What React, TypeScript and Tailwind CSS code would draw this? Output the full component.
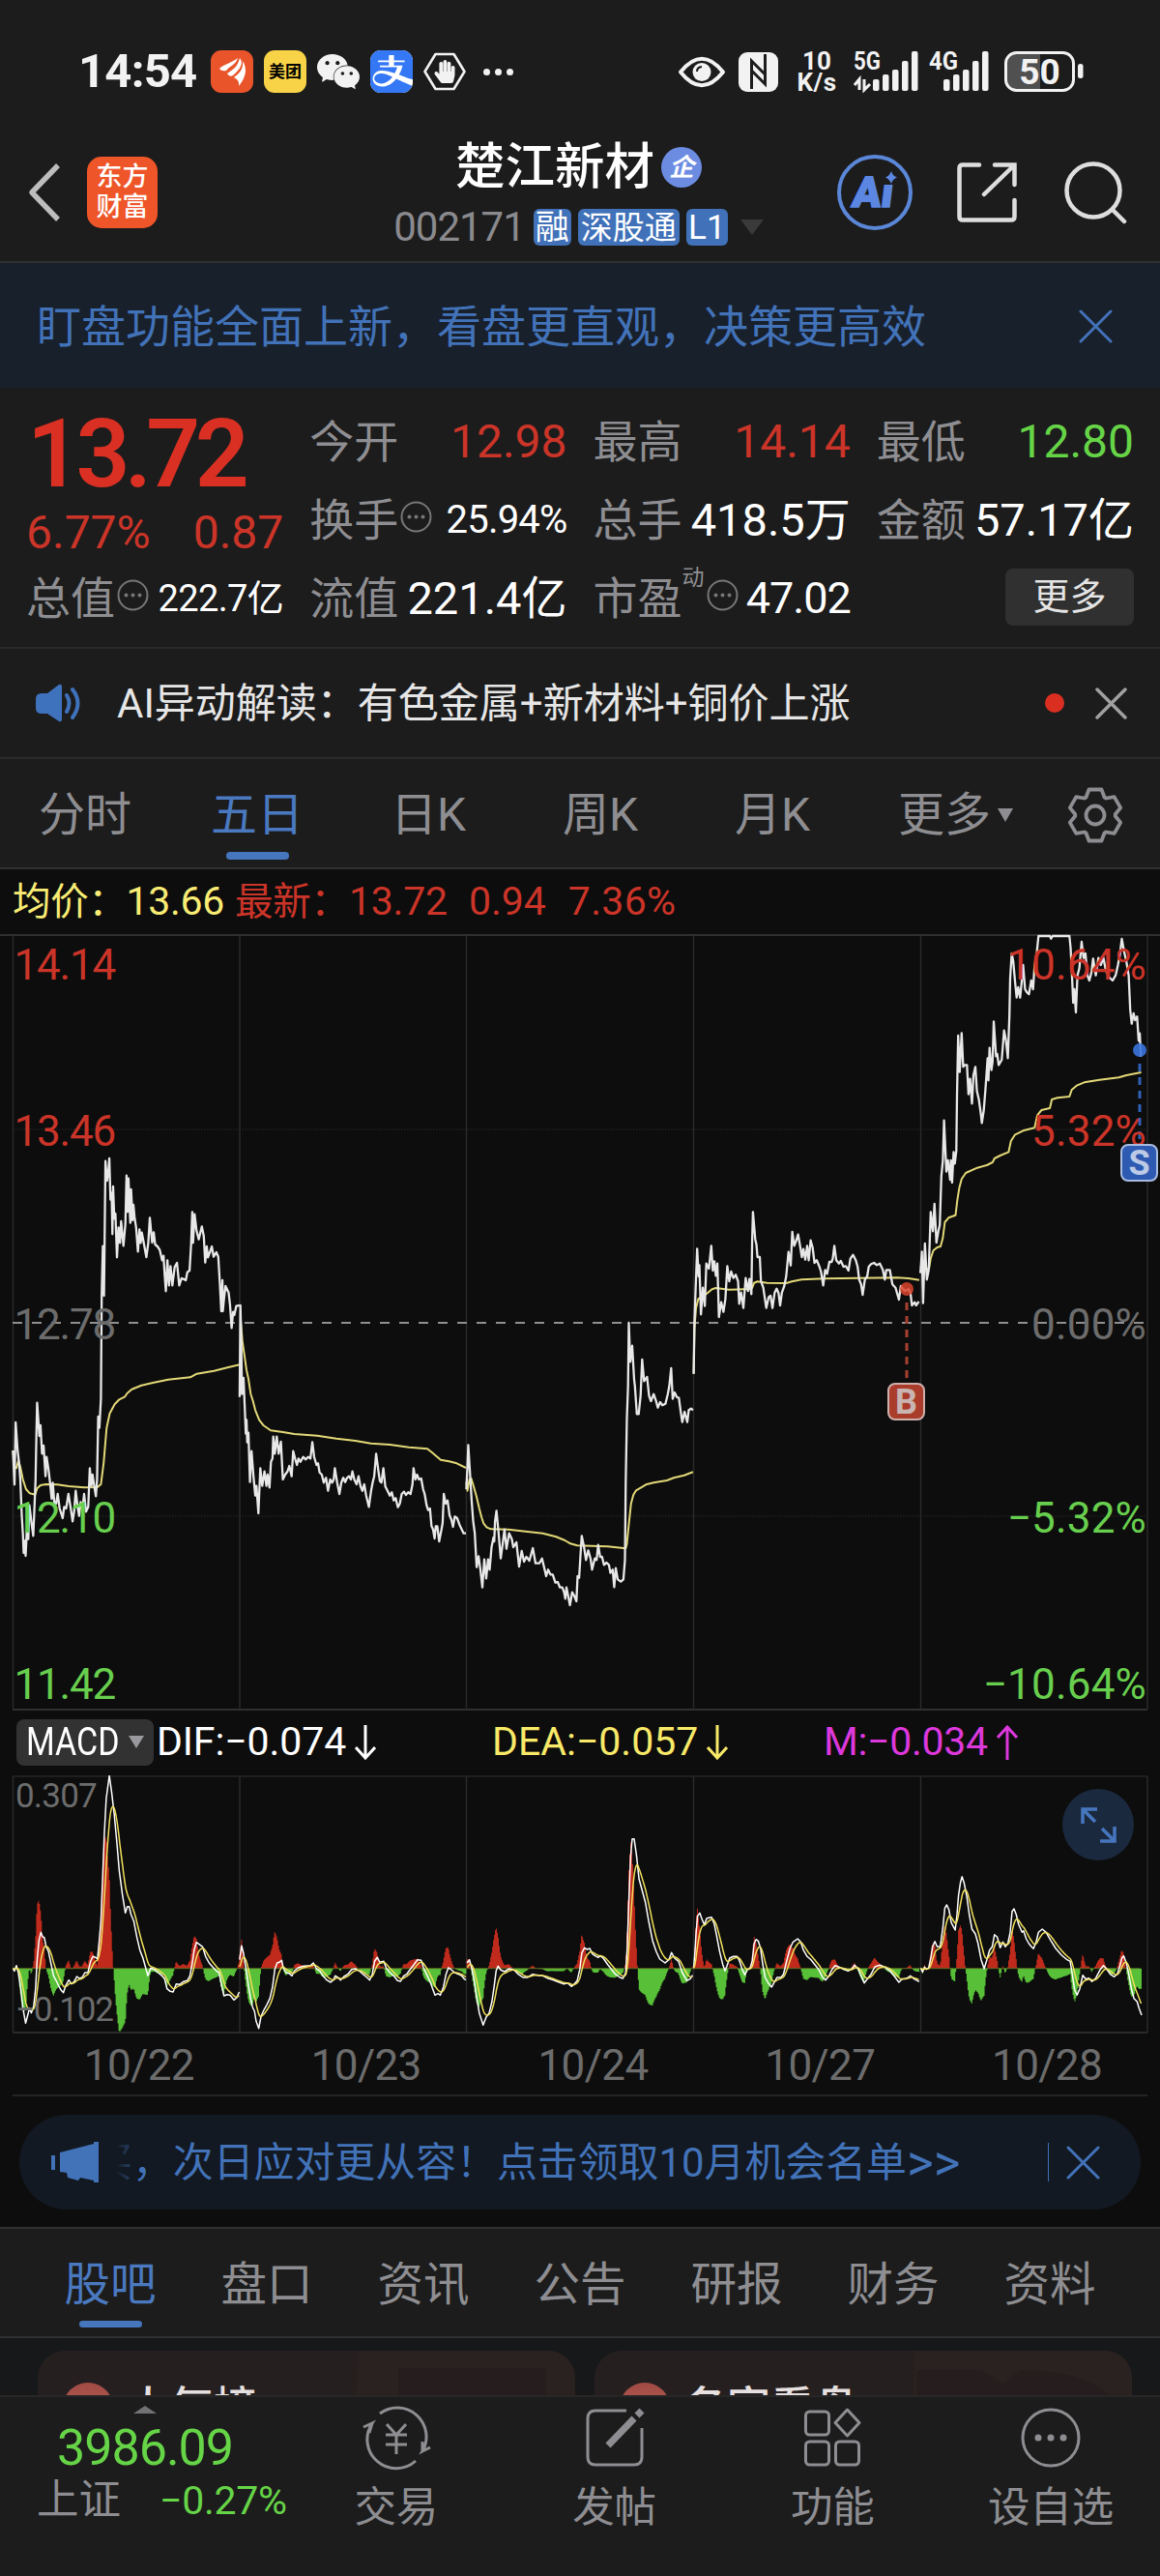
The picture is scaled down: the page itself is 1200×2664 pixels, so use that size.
import type { ReactNode } from "react";
import { FaHandPaper } from "react-icons/fa";
import { SiAlipay, SiWechat } from "react-icons/si";

type Box = { x: number; y: number };

// Chart traces: flat x,y pairs, one array per trading day. 2.529 units per px across, 3 per px down.
const KX = 2.529;
const KY = 3;
const LEFT: Box = { x: 0, y: 0 };
const RIGHT: Box = { x: 580, y: 0 };

const PRICE: { at: Box; pts: number[] }[] = [
  { at: LEFT, pts: [34,600,38,706,41,513,46,600,50,640,53,690,57,800,60,860,62,918,65,880,67,927,70,850,74,875,77,770,80,800,83,830,87,865,90,780,93,690,95,560,97,452,100,500,103,555,106,522,110,610,114,585,119,680,122,620,127,660,131,700,135,750,138,700,142,760,147,765,151,735,156,780,160,795,164,810,168,775,173,780,179,735,185,780,190,820,194,790,198,725,203,775,207,803,211,760,216,780,220,735,225,790,231,775,235,655,239,710,242,675,247,715,251,742,254,690,257,495,260,530,264,440,266,120,269,-34,272,120,276,-298,280,-237,283,-260,286,-306,289,-178,292,-199,294,-71,296,-219,299,-119,302,-135,306,1,310,-92,314,-44,317,-111,323,-35,328,-103,331,-253,334,-140,336,-244,341,-106,343,-210,347,-114,349,-162,352,-124,356,-92,361,-17,365,-86,368,-44,371,-76,376,-44,383,0,388,-44,392,-122,398,-45,402,-77,406,-39,412,-33,418,-22,424,10,428,-4,431,58,434,106,438,10,442,88,446,28,451,88,457,31,463,18,469,88,475,66,480,68,486,72,490,47,496,42,500,-39,503,-140,505,-44,509,-133,514,-84,520,-55,528,-95,533,-65,537,17,541,-33,544,1,549,-15,554,-33,559,-1,566,-15,571,-1,575,79,579,168,582,72,583,168,586,130,590,90,598,110,602,150,606,220,610,170,613,180,618,152,627,150] },
  { at: LEFT, pts: [627,434,629,150,631,250,633,425,637,375,640,460,643,548,645,505,647,575,650,545,654,698,658,602,663,680,668,740,671,710,676,795,681,655,686,710,692,665,697,710,700,675,705,715,709,635,713,625,715,557,719,610,724,557,729,610,735,573,740,690,746,675,752,665,757,648,763,680,767,602,773,630,777,645,781,625,786,635,793,620,800,628,806,620,812,625,817,574,822,620,828,645,832,640,836,668,842,675,847,700,853,685,858,725,864,690,869,700,873,690,876,655,882,700,888,735,893,700,898,685,903,698,908,685,913,680,918,690,922,665,927,690,933,705,938,680,943,710,948,725,953,705,958,740,965,775,971,725,975,700,979,680,984,610,990,665,994,695,998,700,1003,655,1008,712,1014,725,1020,740,1025,730,1030,755,1035,748,1041,776,1046,765,1051,735,1057,728,1062,738,1068,730,1074,735,1079,705,1082,655,1087,690,1091,675,1096,690,1102,687,1107,720,1111,735,1116,770,1120,785,1125,780,1129,835,1133,845,1137,873,1140,835,1144,835,1149,882,1155,845,1158,825,1161,735,1166,765,1171,755,1176,800,1181,815,1185,837,1190,805,1196,810,1202,830,1208,845,1213,857,1219,857] },
  { at: LEFT, pts: [1220,720,1223,650,1225,583,1230,680,1234,755,1238,820,1242,855,1247,962,1252,928,1257,970,1262,1025,1267,938,1272,997,1277,938,1281,970,1286,900,1291,870,1293,882,1295,820,1299,787,1304,850,1310,935,1315,890,1320,845,1325,905,1332,857,1339,875,1343,900,1351,885,1358,960,1365,912,1371,945,1377,930,1385,942,1394,903,1401,950,1411,950,1418,935,1424,965,1429,990,1434,970,1440,985,1446,985,1453,1010,1459,1008,1465,1025,1471,1025,1476,1040,1479,1060,1482,1025,1487,1055,1491,1080,1497,1040,1502,1050,1508,1068,1511,990,1515,995,1519,920,1522,865,1528,900,1533,940,1539,910,1545,935,1549,970,1556,935,1561,940,1565,893,1570,930,1575,930,1580,955,1587,948,1593,955,1597,980,1603,970,1607,1024,1611,965,1616,1000,1624,1007,1631,1000,1635,940,1637,700,1640,500,1643,400,1645,204,1649,325,1654,275,1659,380,1661,400,1666,487,1671,487,1676,430,1680,318,1685,385,1693,372,1698,430,1703,447,1710,425,1716,445,1721,467,1727,450,1733,460,1741,455,1747,425,1751,400,1756,345,1760,440,1765,420,1771,435,1776,437,1781,480,1785,512,1791,480,1798,512,1802,475,1808,470,1813,475] },
  { at: RIGHT, pts: [348,362,350,200,353,100,357,-26,361,60,363,25,367,178,372,95,377,152,381,20,388,36,394,-35,398,42,402,13,406,58,410,20,412,100,414,186,420,140,426,170,431,130,436,28,441,75,446,45,452,65,458,55,464,75,467,145,472,110,478,158,484,65,490,105,494,68,499,115,501,-50,503,-140,509,-55,512,-40,515,0,521,0,524,75,530,95,538,158,544,125,549,120,554,158,560,110,565,98,570,112,574,150,579,110,585,90,590,60,596,-16,602,26,606,-78,611,-35,616,-50,621,-70,625,-45,631,0,635,-25,640,8,645,-35,649,10,654,-52,659,-30,664,18,670,10,677,30,681,45,687,88,692,40,697,52,703,15,709,15,712,5,716,-35,721,10,728,20,733,12,740,30,746,28,753,42,758,5,765,-7,772,10,777,30,781,70,786,85,790,117,796,70,802,60,806,30,812,22,820,18,827,25,835,20,843,40,848,70,852,40,861,40,868,85,876,95,885,132,890,90,900,105,910,100,915,110,919,150,926,140,930,150,937,138] },
  { at: RIGHT, pts: [941,50,943,20,945,-17,948,143,953,-42,958,70,963,40,968,-140,972,-100,974,-80,978,-165,983,-45,988,-80,992,-100,996,-250,1000,-300,1003,-424,1009,-265,1013,-300,1019,-240,1021,-300,1024,-231,1028,-326,1031,-290,1035,-330,1037,-500,1040,-687,1044,-574,1049,-695,1053,-590,1057,-596,1063,-596,1067,-505,1071,-553,1076,-476,1080,-564,1085,-590,1089,-515,1094,-489,1099,-446,1102,-416,1107,-456,1111,-515,1117,-617,1119,-548,1122,-649,1127,-580,1130,-606,1133,-731,1139,-623,1142,-630,1146,-596,1154,-612,1160,-703,1165,-671,1170,-617,1174,-746,1176,-864,1180,-942,1184,-917,1189,-853,1193,-805,1197,-837,1202,-805,1206,-853,1210,-906,1215,-831,1220,-821,1225,-815,1231,-858,1236,-831,1240,-906,1246,-949,1250,-996,1280,-996,1283,-988,1287,-996,1331,-996,1334,-960,1338,-864,1341,-789,1344,-831,1348,-759,1352,-874,1357,-896,1363,-978,1368,-928,1373,-942,1378,-874,1383,-858,1389,-885,1393,-926,1400,-874,1407,-928,1413,-906,1420,-928,1426,-890,1434,-869,1444,-858,1452,-874,1458,-906,1463,-939,1468,-987,1474,-949,1480,-917,1486,-874,1490,-767,1494,-724,1499,-756,1503,-735,1508,-746,1512,-671,1515,-694,1518,-622] },
];

const AVERAGE: { at: Box; pts: number[] }[] = [
  { at: LEFT, pts: [34,600,38,650,43,655,48,632,53,650,60,690,68,720,78,733,92,737,97,718,106,708,120,705,150,706,180,711,220,715,255,714,264,705,271,640,279,530,287,485,300,457,312,442,326,434,333,422,345,410,370,398,400,390,440,380,498,373,515,362,560,353,600,341,627,334] },
  { at: LEFT, pts: [630,200,634,260,640,310,645,350,650,378,656,425,662,448,668,475,678,505,690,523,708,538,740,543,770,549,830,554,880,563,930,570,970,578,1020,582,1070,590,1118,595,1130,606,1153,629,1175,634,1195,640,1219,654] },
  { at: LEFT, pts: [1220,698,1223,725,1228,690,1233,687,1240,715,1247,745,1254,780,1260,808,1265,826,1273,838,1284,844,1330,845,1380,852,1420,857,1455,868,1478,879,1492,889,1510,895,1565,897,1590,898,1637,904,1640,890,1645,830,1651,765,1657,738,1664,724,1676,716,1690,706,1710,700,1745,693,1763,685,1790,677,1813,667] },
  { at: RIGHT, pts: [348,362,350,220,354,160,360,130,370,122,384,112,396,100,406,96,440,101,495,99,501,96,506,80,515,76,540,80,590,81,605,76,630,70,690,67,780,65,880,64,910,66,938,71] },
  { at: RIGHT, pts: [941,30,948,35,958,38,964,34,968,4,975,-20,985,-30,994,-33,1000,-60,1005,-108,1015,-122,1033,-130,1038,-178,1043,-215,1049,-242,1060,-261,1090,-277,1115,-285,1130,-294,1135,-306,1150,-315,1172,-326,1178,-360,1188,-379,1210,-392,1240,-401,1247,-440,1258,-456,1280,-462,1285,-489,1300,-494,1331,-498,1337,-519,1350,-532,1370,-542,1410,-550,1460,-557,1480,-564,1519,-573] },
];

const ZERO = 767;
const DIF: { at: Box; pts: number[] }[] = [
  { at: LEFT, pts: [34,767,38,775,43,758,48,780,53,820,60,890,67,937,73,910,77,890,82,905,88,885,93,830,97,740,102,680,107,655,111,668,116,672,121,700,127,715,133,750,140,790,147,805,153,820,160,835,166,842,172,820,180,803,187,815,194,808,201,792,208,798,215,795,222,780,230,780,237,745,243,730,250,733,255,738,259,690,264,620,268,500,273,350,278,240,286,169,292,220,299,290,306,380,312,465,320,535,328,595,333,575,338,575,343,600,350,620,358,670,366,710,374,735,381,765,387,790,394,766,404,770,414,780,424,790,431,800,437,830,445,838,453,840,461,815,470,817,480,808,490,805,497,790,503,750,508,710,514,686,521,692,530,700,538,730,547,750,556,762,566,775,573,780,580,820,586,852,594,848,602,850,612,865,619,858,626,840] },
  { at: LEFT, pts: [627,740,632,697,637,720,644,770,650,820,656,862,661,888,666,900,670,930,677,953,683,915,691,895,698,880,706,860,713,825,719,770,725,750,731,748,737,742,741,765,748,780,756,782,764,790,770,775,780,765,795,760,812,758,820,750,828,768,837,775,845,790,855,803,865,810,872,803,877,790,884,795,891,803,900,792,910,785,920,770,930,768,940,775,950,785,960,795,967,803,974,785,980,745,987,733,994,748,1004,745,1010,765,1020,780,1030,790,1040,805,1048,807,1056,790,1064,785,1073,770,1083,755,1092,740,1102,742,1108,765,1118,790,1126,810,1132,830,1138,850,1146,845,1152,850,1160,825,1167,785,1173,765,1180,770,1190,780,1200,785,1208,790,1215,800,1219,803] },
  { at: LEFT, pts: [1222,750,1228,740,1234,765,1240,800,1246,850,1254,905,1264,943,1272,918,1280,905,1287,870,1293,820,1298,775,1303,760,1310,772,1320,777,1332,768,1345,772,1356,785,1368,795,1380,795,1394,785,1405,788,1420,790,1432,797,1445,802,1458,808,1475,815,1485,812,1495,823,1503,815,1510,805,1517,770,1522,720,1529,703,1536,708,1543,705,1550,722,1557,728,1565,733,1570,728,1578,735,1590,755,1600,770,1610,785,1622,795,1630,798,1637,780,1641,700,1645,560,1650,420,1654,365,1659,365,1665,415,1672,490,1680,525,1688,560,1697,620,1707,680,1717,715,1726,738,1740,750,1750,740,1757,718,1765,735,1775,745,1785,780,1797,805,1805,800,1812,788] },
  { at: RIGHT, pts: [348,765,351,720,354,660,358,605,364,595,369,612,376,632,382,612,388,610,395,608,402,630,408,665,416,715,424,755,430,775,435,760,442,735,452,730,462,730,468,745,475,770,482,787,488,772,496,765,501,745,506,690,511,677,517,682,523,705,528,750,535,795,543,812,552,825,558,812,566,795,576,795,583,785,592,740,600,705,608,685,620,675,628,685,635,710,645,730,655,740,665,755,675,770,685,795,693,803,701,792,710,770,718,758,728,763,742,770,752,775,762,768,769,757,778,768,786,790,794,812,802,800,812,785,822,762,835,757,848,763,862,775,872,790,885,810,893,800,905,798,915,790,925,800,938,808] },
  { at: RIGHT, pts: [942,767,947,778,952,763,957,770,963,765,969,730,973,700,979,683,985,700,993,700,1000,640,1005,580,1010,570,1016,585,1022,625,1032,648,1037,600,1041,540,1046,500,1050,482,1055,500,1062,540,1069,600,1076,645,1085,660,1092,690,1100,740,1108,768,1115,740,1122,710,1129,700,1135,662,1142,670,1150,703,1157,685,1163,700,1170,690,1176,655,1181,590,1186,582,1192,600,1198,630,1207,655,1211,650,1218,675,1225,690,1232,700,1237,706,1244,685,1250,655,1260,645,1270,655,1282,680,1295,705,1310,725,1325,740,1333,745,1339,790,1345,835,1351,850,1358,830,1366,788,1374,800,1382,797,1390,808,1400,797,1412,770,1420,758,1428,768,1438,785,1448,793,1456,785,1463,760,1468,735,1473,728,1480,750,1487,790,1493,830,1500,860,1508,870,1513,890,1520,912] },
];

function toPoints(at: Box, pts: number[], top: number) {
  const out: string[] = [];
  for (let i = 0; i < pts.length; i += 2) out.push(`${(at.x + pts[i] / KX).toFixed(1)},${(top + pts[i + 1] / KY).toFixed(1)}`);
  return out.join(" ");
}

// DEA is a 9-period EMA of DIF, the bars are twice the gap between them
function macd(at: Box, pts: number[], top: number) {
  const step = 2.475;
  let dea = ZERO;
  let i = 0;
  const deaPts: number[] = [];
  let up = "";
  let down = "";
  for (let x = pts[0]; x <= pts[pts.length - 2]; x += step) {
    while (i < pts.length - 4 && pts[i + 2] < x) i += 2;
    const t = (x - pts[i]) / (pts[i + 2] - pts[i]);
    const dif = pts[i + 1] + (pts[i + 3] - pts[i + 1]) * t;
    dea += (dif - dea) * 0.2;
    deaPts.push(x, dea);
    const px = (at.x + x / KX - 0.5).toFixed(2);
    const bar = `M${px} ${(top + ZERO / KY).toFixed(1)}v${((2 * (dif - dea)) / KY).toFixed(1)}h1v${((-2 * (dif - dea)) / KY).toFixed(1)}z`;
    if (dif < dea) up += bar;
    else down += bar;
  }
  return { dea: toPoints(at, deaPts, top), up, down };
}

const GRID_X = [13.5, 248, 482.5, 717.5, 952.5, 1187];

function gearPath() {
  let d = "";
  for (let k = 0; k < 6; k++) {
    const a = (k * Math.PI) / 3;
    const pts = [[-9.5, -18.5], [-6.5, -26.5], [6.5, -26.5], [9.5, -18.5]];
    for (const [x, y] of pts) {
      const px = x * Math.cos(a) - y * Math.sin(a);
      const py = x * Math.sin(a) + y * Math.cos(a);
      d += `${d ? "L" : "M"}${px.toFixed(1)} ${py.toFixed(1)}`;
    }
  }
  return d + "Z";
}

function Close({ size, width, className }: { size: number; width: number; className: string }) {
  return (
    <svg width={size} height={size} viewBox={`0 0 ${size} ${size}`} className={className} stroke="currentColor" strokeWidth={width} strokeLinecap="round">
      <path d={`M2 2L${size - 2} ${size - 2}M${size - 2} 2L2 ${size - 2}`} />
    </svg>
  );
}

function Bars({ x }: { x: number }) {
  const heights = [12, 17, 22, 31, 41];
  return <>{heights.map((h, i) => <rect key={h} x={x + i * 10} y={42 - h} width="6.5" height={h} rx="2" fill="#f2f2f2" />)}</>;
}

function StatusBar() {
  return (
    <div className="flex h-[130px] items-start pt-[52px] pl-[81px] text-[#f2f2f2]">
      <div className="w-[137px] text-[49px] leading-[44px] font-bold tracking-[-0.8px]">14:54</div>
      <div className="flex items-center gap-[11px]">
        <svg width="44" height="44" viewBox="0 0 44 44">
          <rect width="44" height="44" rx="11" fill="#e9542b" />
          <path d="M9 19C14 14 20 14 28 8C26 15 20 16 16 21Q11 22 9 19ZM17 24C23 20 28 17 30 8C35 14 29 21 23 26Q19 28 17 24ZM24 28C31 23 34 18 33 11C39 20 35 30 29 37Q30 31 24 28Z" fill="#fff" />
        </svg>
        <div className="flex size-11 items-center justify-center rounded-[11px] bg-[#f8d347] text-[17px] leading-none font-bold text-black">美团</div>
        <SiWechat size={44} />
        <div className="flex size-11 items-center justify-center overflow-hidden rounded-[11px] bg-white">
          <SiAlipay size={46} color="#3478f6" className="shrink-0" />
        </div>
        <div className="relative flex size-11 items-center justify-center">
          <svg width="44" height="44" viewBox="0 0 44 44" className="absolute inset-0">
            <path d="M12.500 4H31.500L42.500 22L31.500 40H12.500L1.500 22Z" fill="none" stroke="#f2f2f2" strokeWidth="2.600" strokeLinejoin="round" />
          </svg>
          <FaHandPaper size={24} />
        </div>
        <div className="ml-[7px] flex gap-[5px]">
          <i className="size-[7px] rounded-full bg-[#f2f2f2]" />
          <i className="size-[7px] rounded-full bg-[#f2f2f2]" />
          <i className="size-[7px] rounded-full bg-[#f2f2f2]" />
        </div>
      </div>
      <div className="ml-auto flex pr-[78px]">
        <svg width="50" height="44" viewBox="0 0 50 44" fill="none" stroke="#f2f2f2">
          <path d="M3 22.500Q25-5 47 22.500Q25 50 3 22.500Z" strokeWidth="4" strokeLinejoin="round" />
          <circle cx="25" cy="22.500" r="9.500" fill="#f2f2f2" stroke="none" />
          <path d="M20 22Q20 17.500 25 17" stroke="#1c1c1c" strokeWidth="2" />
        </svg>
        <svg width="41" height="44" viewBox="0 0 41 44" className="ml-[13px]" fill="none">
          <rect y="2" width="41" height="41" rx="9" fill="#f2f2f2" />
          <path d="M13.500 40V11L27.500 25" stroke="#1c1c1c" strokeWidth="3" />
          <path d="M27.500 4V35L13.500 21" stroke="#1c1c1c" strokeWidth="3" />
        </svg>
        <div className="ml-[15px] w-[50px] text-center text-[26px] leading-[22px] font-bold">
          <div>10</div>
          <div className="tracking-[0.5px]">K/s</div>
        </div>
        <svg width="68" height="44" viewBox="0 0 68 44" className="ml-[13px] overflow-visible">
          <text x="0" y="20" fontSize="26" fontWeight="700" fill="#f2f2f2" textLength="28" lengthAdjust="spacingAndGlyphs">5G</text>
          <path d="M1 36L6 30V41M11 30V41L17 35" stroke="#f2f2f2" strokeWidth="3" fill="none" />
          <Bars x={20} />
        </svg>
        <svg width="63" height="44" viewBox="0 0 63 44" className="ml-[10px] overflow-visible">
          <text x="0" y="20" fontSize="26" fontWeight="700" fill="#f2f2f2" textLength="30" lengthAdjust="spacingAndGlyphs">4G</text>
          <Bars x={15} />
        </svg>
        <svg width="83" height="44" viewBox="0 0 83 44" className="ml-[15px]">
          <path d="M12 3H37V41H12Q3 41 3 30V14Q3 3 12 3Z" fill="#505050" />
          <rect x="1.500" y="2.500" width="70" height="39" rx="11" fill="none" stroke="#f2f2f2" strokeWidth="3" />
          <rect x="76" y="14" width="5.500" height="15" rx="2.500" fill="#f2f2f2" />
          <text x="36.500" y="35" textAnchor="middle" fontSize="37" fontWeight="700" fill="#f2f2f2">50</text>
        </svg>
      </div>
    </div>
  );
}

function Header() {
  return (
    <header className="flex h-[142px] items-center border-b-2 border-[#303030]">
      <div className="-mt-[2px] flex w-[333px] items-center pl-[29px]">
        <svg width="34" height="60" viewBox="0 0 34 60" fill="none" stroke="#bdbdbd" strokeWidth="5.500"><path d="M31 2L4 30L31 58" strokeLinejoin="round" /></svg>
        <div className="ml-[27px] flex h-[74px] w-[73px] flex-col items-center justify-center rounded-[15px] bg-[#ee5528] text-[27px] leading-[31px] font-medium text-white">
          <span>东方</span>
          <span>财富</span>
        </div>
      </div>
      <div className="mt-[6px] flex flex-1 flex-col items-center pr-[3px]">
        <div className="flex h-[64px] items-center gap-[7px]">
          <h1 className="text-[51.500px] leading-none font-medium text-white">楚江新材</h1>
          <span className="flex size-[42px] items-center justify-center rounded-full bg-[#6c8ce2] text-[26px] leading-none font-bold text-white italic">企</span>
        </div>
        <div className="flex h-[60px] items-center text-[35px] leading-none text-white">
          <span className="mr-[9px] text-[42px] tracking-[-1px] text-[#8a8a8e]">002171</span>
          <span className="mr-[7px] flex h-[38px] w-[39px] items-center justify-center rounded-md bg-[#4071b9]">融</span>
          <span className="mr-[7px] flex h-[38px] w-[105px] items-center justify-center rounded-md bg-[#4071b9] text-[33px]">深股通</span>
          <span className="flex h-[38px] w-[43px] items-center justify-center rounded-md bg-[#4071b9]">L1</span>
          <i className="ml-[13px] border-x-[12px] border-t-[16px] border-x-transparent border-t-[#3a3a3a]" />
        </div>
      </div>
      <div className="-mt-[2px] flex w-[333px] items-center">
        <svg width="78" height="78" viewBox="0 0 78 78" className="-ml-px">
          <circle cx="39" cy="39" r="37" fill="none" stroke="#5b87d8" strokeWidth="4" />
          <text x="21" y="54" fontSize="44" fontWeight="900" fill="#5b87e3" stroke="#5b87e3" strokeWidth="1.500" transform="skewX(-7)">Ai</text>
          <rect x="45" y="14" width="18" height="17" fill="#1c1c1c" />
          <path d="M56 17Q57.500 22 62 23.500Q57.500 25 56 30Q54 25 50 23.500Q54 22 56 17Z" fill="#5b87e3" />
        </svg>
        <svg width="62" height="62" viewBox="0 0 62 62" className="ml-[46px]" fill="none" stroke="#dedede" strokeWidth="4.500" strokeLinecap="round">
          <path d="M23 2.500H6Q2.500 2.500 2.500 6V56Q2.500 59.500 6 59.500H56Q59.500 59.500 59.500 56V39M39 2.500H59.500V23M58 4L28 33" />
        </svg>
        <svg width="66" height="66" viewBox="0 0 66 66" className="ml-[49px]" fill="none" stroke="#dedede" strokeWidth="4.500" strokeLinecap="round">
          <circle cx="30" cy="31" r="27.500" />
          <path d="M50 51L62 63" />
        </svg>
      </div>
    </header>
  );
}

function More() {
  return (
    <svg width="33" height="33" viewBox="0 0 33 33" className="ml-[2px] shrink-0 -translate-y-[3px]" fill="#77777a">
      <circle cx="16.500" cy="16.500" r="15" fill="none" stroke="#77777a" strokeWidth="2" />
      <circle cx="9.500" cy="16.500" r="2" />
      <circle cx="16.500" cy="16.500" r="2" />
      <circle cx="23.500" cy="16.500" r="2" />
    </svg>
  );
}

function Stat({ label, children, value }: { label: string; children?: ReactNode; value: ReactNode }) {
  return (
    <div className="flex h-[81px] items-center whitespace-nowrap leading-none">
      <span className="text-[46px] text-[#8e8e92]">{label}</span>
      {children}
      <span className="ml-auto">{value}</span>
    </div>
  );
}

function Quote() {
  return (
    <section className="grid h-[270px] grid-cols-4 content-start gap-x-[27px] border-b-2 border-[#292929] pt-[15px] pr-[27px] pl-[27px]">
      <div className="row-span-2 h-[162px] leading-none text-[#d93023]">
        <div className="pt-[5px] pl-px text-[98px] leading-[98px] font-semibold tracking-[-5.5px]">13.72</div>
        <div className="mt-[6px] flex justify-between text-[48px] leading-[52px] text-[#cb3428]"><span>6.77%</span><span>0.87</span></div>
      </div>
      <Stat label="今开" value={<span className="text-[48px] text-[#cb3428]">12.98</span>} />
      <Stat label="最高" value={<span className="text-[48px] text-[#cb3428]">14.14</span>} />
      <Stat label="最低" value={<span className="text-[48px] text-[#66d447]">12.80</span>} />
      <Stat label="换手" value={<span className="text-[40px] tracking-[-0.8px] text-white">25.94%</span>}><More /></Stat>
      <Stat label="总手" value={<span className="text-[47px] text-white">418.5万</span>} />
      <Stat label="金额" value={<span className="text-[47px] text-white">57.17亿</span>} />
      <Stat label="总值" value={<span className="text-[38px] tracking-[-0.6px] text-white">222.7亿</span>}><More /></Stat>
      <Stat label="流值" value={<span className="text-[47px] text-white">221.4亿</span>} />
      <Stat label="市盈" value={<span className="text-[45px] tracking-[-1px] text-white">47.02</span>}>
        <span className="-mt-[42px] w-[23px] text-[23px] text-[#8e8e92]">动</span>
        <More />
      </Stat>
      <div className="flex h-[78px] items-center justify-end">
        <button type="button" className="h-[59px] w-[133px] rounded-lg bg-[#303030] text-[38px] leading-none text-[#e4e4e4]">更多</button>
      </div>
    </section>
  );
}

function AiNews() {
  return (
    <section className="flex h-[114px] items-center border-b-2 border-[#2b2b2b] pr-[34px] pl-[37px]">
      <svg width="48" height="40" viewBox="0 0 48 40" fill="#3f72bd">
        <path d="M6 10H12L24 1Q27 0 27 3V37Q27 40 24 39L12 31H6Q0 31 0 25V16Q0 10 6 10Z" />
        <path d="M32 12Q37 20 32 29M38 6Q49 20 38 35" fill="none" stroke="#3f72bd" strokeWidth="4" strokeLinecap="round" />
      </svg>
      <p className="ml-[36px] pt-px text-[42px] leading-none text-[#e6e6e6]">AI异动解读：有色金属+新材料+铜价上涨</p>
      <i className="ml-auto size-5 rounded-full bg-[#da2f20]" />
      <Close size={33} width={3.5} className="ml-[32px] text-[#a0a0a0]" />
    </section>
  );
}

function PeriodTabs() {
  return (
    <nav className="flex h-[114px] border-b-2 border-[#303030] pt-[33px] pl-[40px] text-[48px] leading-[50px] text-[#8e8e92]">
      <span className="w-[178px]">分时</span>
      <span className="w-[186px] text-[#4a79c0]">
        五日
        <i className="mt-[13px] ml-[16px] block h-[8px] w-[65px] rounded bg-[#4576be]" />
      </span>
      <span className="w-[178px]">日K</span>
      <span className="w-[178px]">周K</span>
      <span className="w-[169px]">月K</span>
      <span className="w-[103px] whitespace-nowrap">更多</span>
      <i className="mt-[18px] h-0 w-0 border-x-[8px] border-t-[14px] border-x-transparent border-t-[#8e8e92]" />
      <svg width="60" height="60" viewBox="-30 -30 60 60" className="ml-[55px] -mt-[5px]" fill="none" stroke="#8e8e92" strokeWidth="3.800">
        <path d={gearPath()} strokeLinejoin="round" />
        <circle r="9.500" />
      </svg>
    </nav>
  );
}

function PriceChart() {
  const top = 334;
  const labels: [string, string, number, string][] = [
    ["14.14", "10.64%", 47, "#cb3428"],
    ["13.46", "5.32%", 219, "#cb3428"],
    ["12.78", "0.00%", 419, "#6c6c6c"],
    ["12.10", "−5.32%", 619, "#68cf4e"],
    ["11.42", "−10.64%", 791, "#68cf4e"],
  ];
  return (
    <svg width="1200" height="804" viewBox="0 0 1200 804" className="block" fill="none">
      <path d="M0 1H1200M13 802H1187" stroke="#303030" strokeWidth="2" />
      {GRID_X.map((x) => <path key={x} d={`M${x} 1V802`} stroke="#2a2a2a" strokeWidth="1.500" />)}
      <path d="M13 202H1187M13 602H1187" stroke="#2a2a2a" strokeDasharray="1.500 1.500" />
      <path d="M13 402H1187" stroke="#8f8f8f" strokeWidth="2" strokeDasharray="10 10" />
      {AVERAGE.map((d, i) => <polyline key={i} points={toPoints(d.at, d.pts, top)} stroke="#e2d877" strokeWidth="2" strokeLinejoin="round" />)}
      {PRICE.map((d, i) => <polyline key={i} points={toPoints(d.at, d.pts, top)} stroke="#e8e8e8" strokeWidth="2.300" strokeLinejoin="round" />)}
      <path d="M938 381V460" stroke="#a8402f" strokeWidth="3" strokeDasharray="8 6" />
      <circle cx="938" cy="367" r="7" fill="#d9452f" fillOpacity="0.850" />
      <rect x="919" y="465" width="37" height="37" rx="7" fill="#a93c2b" stroke="#cdb0ab" strokeWidth="2" />
      <text x="937.500" y="496" textAnchor="middle" fontSize="36" fontWeight="700" fill="#c9b4b2">B</text>
      <path d="M1179 134V212" stroke="#3060b8" strokeWidth="3" strokeDasharray="8 6" />
      <circle cx="1179" cy="120" r="7" fill="#3b74dd" fillOpacity="0.900" />
      {labels.map(([price, pct, y, color]) => (
        <g key={price} fill={color} fontSize="44">
          <text x="14.500" y={y} letterSpacing="-1.200">{price}</text>
          <text x="1186" y={y} textAnchor="end" letterSpacing="0.200">{pct}</text>
        </g>
      ))}
      <rect x="1160" y="218" width="37" height="37" rx="7" fill="#2e5ab2" stroke="#a9bce0" strokeWidth="2" />
      <text x="1178.500" y="249" textAnchor="middle" fontSize="36" fontWeight="700" fill="#bccae6">S</text>
    </svg>
  );
}

function Arrow({ up }: { up?: boolean }) {
  return (
    <svg width="22" height="36" viewBox="0 0 22 36" className="ml-[9px]" fill="none" stroke="currentColor" strokeWidth="3">
      <path d={up ? "M11 36V2M1 13L11 2L21 13" : "M11 0V34M1 23L11 34L21 23"} />
    </svg>
  );
}

function MacdHeader() {
  return (
    <div className="flex h-[66px] items-center pr-[145px] pb-[3px] pl-[17px] text-[41px] leading-none">
      <button type="button" className="flex h-[48px] w-[142px] items-center rounded-lg bg-[#323232] pl-[10px] text-white">
        <span className="w-[106px] origin-left scale-x-[0.83] text-left">MACD</span>
        <i className="border-x-[8px] border-t-[13px] border-x-transparent border-t-[#9a9a9e]" />
      </button>
      <div className="ml-[3px] flex w-[347px] items-center tracking-[-0.1px] text-white">DIF:−0.074<Arrow /></div>
      <div className="flex w-[343px] items-center text-[#f8e968]">DEA:−0.057<Arrow /></div>
      <div className="flex items-center tracking-[-0.3px] text-[#dc38dc]">M:−0.034<Arrow up /></div>
    </div>
  );
}

function MacdChart() {
  const top = -56;
  const days = DIF.map((d) => ({ ...macd(d.at, d.pts, top), dif: toPoints(d.at, d.pts, top) }));
  return (
    <div className="relative">
      <svg width="1200" height="267" viewBox="0 0 1200 267" className="block" fill="none">
        <path d="M13 1H1187" stroke="#262626" strokeWidth="1.500" />
        <path d="M13 266H1187" stroke="#2a2a2a" strokeWidth="2" />
        {GRID_X.map((x) => <path key={x} d={`M${x} 1V266`} stroke="#2a2a2a" strokeWidth="1.500" />)}
        {days.map((d, i) => (
          <g key={i}>
            <path d={d.up} fill="#bf2a1c" />
            <path d={d.down} fill="#58c038" />
          </g>
        ))}
        <path d="M13 199.700H1179" stroke="#5a6a20" strokeWidth="1" />
        {days.map((d, i) => (
          <g key={i} strokeWidth="1.500" strokeLinejoin="round">
            <polyline points={d.dif} stroke="#fff" />
            <polyline points={d.dea} stroke="#f0e05c" />
          </g>
        ))}
        <g fontSize="35" fill="#6c6c6c">
          <text x="16" y="33" letterSpacing="-0.800">0.307</text>
          <text x="16" y="254" letterSpacing="-1.200">−0.102</text>
        </g>
      </svg>
      <svg width="74" height="74" viewBox="0 0 74 74" className="absolute top-[14px] left-[1099px]" fill="none" stroke="#4576be" strokeWidth="3.500">
        <circle cx="37" cy="37" r="37" fill="#1b293e" stroke="none" />
        <path d="M21 36V21H36M21.500 21.500L34 34M54 39V54H39M53.500 53.500L41 41" />
      </svg>
    </div>
  );
}

function Dates() {
  return (
    <div className="mx-[13px] flex h-[65px] items-center border-b-2 border-[#242424] pt-[3px] text-[44px] leading-none text-[#6c6c6c]">
      {["10/22", "10/23", "10/24", "10/27", "10/28"].map((d) => <span key={d} className="flex-1 pl-[27px] text-center tracking-[-0.6px]">{d}</span>)}
    </div>
  );
}

function Promo() {
  return (
    <div className="px-5 pt-[19px] pb-[18px]">
      <div className="flex h-[98px] items-center rounded-full bg-[#121922] pr-[42px] pl-[32px] text-[#4272b8]">
        <svg width="50" height="42" viewBox="0 0 50 42" fill="#4272b8">
          <path d="M1 14H5V29H1ZM10 11L45 2V40L31 37L29 40L18 37L17 32L10 31ZM45 0H50V42H45Z" />
        </svg>
        <div className="flex w-[904px] items-center pt-[2px] text-[41.900px] leading-[56px] whitespace-nowrap">
          <span className="-ml-[7px] bg-linear-to-r from-transparent from-60% to-[#4272b8]/50 bg-clip-text text-transparent">买</span>
          <span>，次日应对更从容！点击领取10月机会名单</span>
          <span className="text-[53px]">&gt;&gt;</span>
        </div>
        <i className="ml-auto mr-[18px] h-[40px] w-px bg-[#4272b8]" />
        <Close size={35} width={3} className="text-[#4272b8]" />
      </div>
    </div>
  );
}

function InfoTabs() {
  const tabs = ["股吧", "盘口", "资讯", "公告", "研报", "财务", "资料"];
  return (
    <nav className="flex h-[115px] border-y-2 border-[#303030] bg-[#1c1c1c] pt-[33px] pr-[33px] pl-[33px] text-[47.500px] leading-[50px] text-[#8e8e92]">
      {tabs.map((t, i) => (
        <div key={t} className={i === 0 ? "flex flex-1 flex-col items-center text-[#4a79c0]" : "flex flex-1 flex-col items-center"}>
          {t}
          {i === 0 && <i className="mt-[12px] h-[7px] w-[65px] rounded bg-[#4576be]" />}
        </div>
      ))}
    </nav>
  );
}

function Card({ title, shape }: { title: string; shape: string }) {
  return (
    <div className="relative h-[150px] w-[556px] shrink-0 overflow-hidden rounded-t-[28px] bg-[#261f1f]">
      <svg width="556" height="150" viewBox="0 0 556 150" className="absolute inset-0">
        <path d="M332 0H556V150H325Z" fill="#2a2220" />
        <path d={shape} fill="#261e1e" />
      </svg>
      <div className="relative flex items-start pt-[33px] pl-[26px]">
        <i className="size-[52px] rounded-full bg-linear-to-b from-[#a04a44] to-[#c66a60]" />
        <span className="ml-[14px] pt-[3px] text-[45px] leading-[47px] font-medium text-[#e6e0e0]">{title}</span>
      </div>
    </div>
  );
}

function NavItem({ label, children }: { label: string; children: ReactNode }) {
  return (
    <div className="flex flex-1 flex-col items-center pt-[8px] text-[43.500px] leading-[50px] text-[#8e8e92]">
      <svg width="76" height="68" viewBox="-38 -34 76 68" fill="none" stroke="#8e8e92" strokeWidth="3">{children}</svg>
      <span className="mt-[14px]">{label}</span>
    </div>
  );
}

function BottomBar() {
  return (
    <footer className="flex h-[187px] border-t-2 border-[#272727] bg-[#1c1c1c]">
      <div className="w-[297px] pl-[38px] leading-none whitespace-nowrap">
        <i className="mt-[9px] ml-[100px] block h-0 w-0 border-x-[12px] border-b-[8px] border-x-transparent border-b-[#727275]" />
        <div className="mt-[8px] pl-[21px] text-[52px] leading-[56px] tracking-[-1px] text-[#66d447]">3986.09</div>
        <div className="flex items-center leading-[52px]">
          <span className="text-[43.500px] text-[#8e8e92]">上证</span>
          <span className="ml-[40px] text-[41px] tracking-[-0.3px] text-[#66d447]">−0.27%</span>
        </div>
      </div>
      <NavItem label="交易">
        <path d="M-17 -25A30 30 0 0 1 27 14L35 10M27 14V4M20 24A30 30 0 0 1 -25 -15L-34 -11M-25 -15L-28 -5" />
        <path d="M-10 -14L0 -3L10 -14M0 -3V17M-11 -3H11M-11 7H11" />
      </NavItem>
      <NavItem label="发帖">
        <path d="M12 -28H-20Q-28 -28 -28 -20V20Q-28 28 -20 28H20Q28 28 28 20V-10" />
        <path d="M-7 8L20 -20" strokeWidth="7" />
        <path d="M23 -23L28 -28" strokeWidth="7" />
      </NavItem>
      <NavItem label="功能">
        <rect x="-27.500" y="-27" width="24" height="24" rx="4" />
        <rect x="-27.500" y="4" width="24" height="24" rx="4" />
        <rect x="3.500" y="4" width="24" height="24" rx="4" />
        <path d="M15.500 -29L28 -15.500L15.500 -2L3 -15.500Z" strokeLinejoin="round" />
      </NavItem>
      <NavItem label="设自选">
        <circle r="29" />
        <g fill="#8e8e92" stroke="none"><circle cx="-13" r="3.500" /><circle r="3.500" /><circle cx="13" r="3.500" /></g>
      </NavItem>
    </footer>
  );
}

export default function App() {
  return (
    <div className="h-[2664px] w-[1200px] overflow-hidden bg-[#1c1c1c] font-['Roboto','Noto_Sans_CJK_SC',sans-serif]">
      <StatusBar />
      <Header />
      <div className="flex h-[129px] items-center justify-between bg-[#18202c] pt-[2px] pr-[49px] pl-[38px]">
        <p className="text-[46px] leading-none text-[#4272b8]">盯盘功能全面上新，看盘更直观，决策更高效</p>
        <Close size={35} width={3} className="text-[#4272b8]" />
      </div>
      <Quote />
      <AiNews />
      <PeriodTabs />
      <div className="bg-[#0d0d0d]">
        <div className="flex h-[67px] items-center pl-[13px] text-[41px] leading-none whitespace-pre text-[#cb3428]">
          <span className="w-[230px] tracking-[-0.3px] text-[#f8ec74]"><span className="text-[39.500px]">均价：</span>13.66</span>
          <span className="tracking-[-0.2px]"><span className="text-[39.500px]">最新：</span>13.72</span>
          <span className="ml-[22px]">0.94</span>
          <span className="ml-[23px] tracking-[0.3px]">7.36%</span>
        </div>
        <PriceChart />
        <MacdHeader />
        <MacdChart />
        <Dates />
        <Promo />
      </div>
      <InfoTabs />
      <div className="flex h-[59px] gap-5 overflow-hidden bg-[#17181a] pt-[13px] pl-[39px]">
        <Card title="人气榜" shape="M373 18H526V150H373Z" />
        <Card title="名家看盘" shape="M333 20H400L423 34L440 20Q520 20 545 60V150H333Z" />
      </div>
      <BottomBar />
    </div>
  );
}
